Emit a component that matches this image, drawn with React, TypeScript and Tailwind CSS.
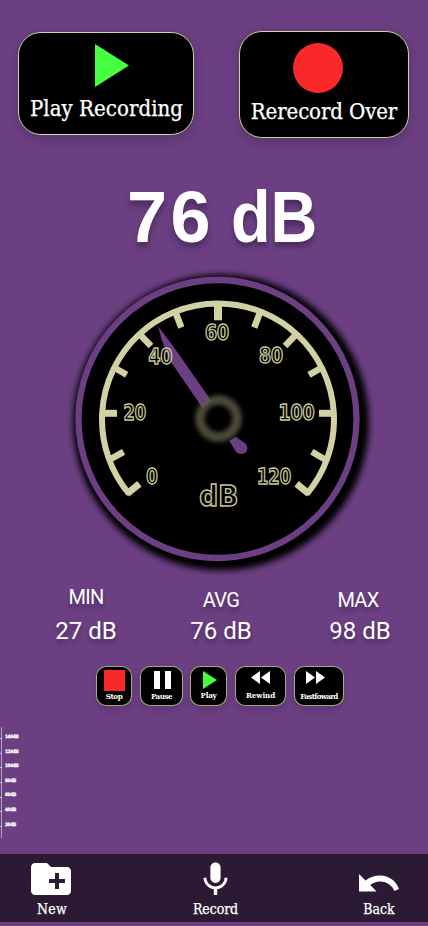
import type { ReactNode } from "react";
import { MdCreateNewFolder, MdMic } from "react-icons/md";

const serif = "font-['DejaVu_Serif_Condensed','DejaVu_Serif',serif]";

const stats = [
    { label: "MIN", value: "27 dB", box: "ml-[46px]", offset: "translate-y-px" },
    { label: "AVG", value: "76 dB", box: "ml-[55px]", offset: "translate-y-1" },
    { label: "MAX", value: "98 dB", box: "ml-[59px]", offset: "translate-y-1 -translate-x-[2px]" },
];

const levels = ["140dB", "120dB", "100dB", "80dB", "60dB", "40dB", "20dB"];

// x1, y1, x2, y2, width
const ticks = [
    [127, 493.9, 139.4, 483.8, 7],
    [109, 460, 123.6, 451.8, 6.5],
    [103, 413.3, 117, 413.3, 7],
    [114, 367.5, 126.7, 374.8, 6.5],
    [139, 333.5, 151, 346, 6.5],
    [175, 311, 181.3, 327.5, 6.5],
    [218, 303, 218, 320.3, 8],
    [260.5, 311, 254.3, 327.5, 6.5],
    [297, 333.5, 285, 346, 6.5],
    [322, 367.5, 309, 374.8, 6.5],
    [333, 413.3, 319, 413.3, 7],
    [326, 460, 311.8, 451.8, 6.5],
    [309, 493.9, 296.6, 483.8, 7],
];

const numbers: [string, number, number, number][] = [
    ["0", 152, 484.3, 11.5],
    ["20", 134.8, 420.3, 22.5],
    ["40", 160.5, 364, 24],
    ["60", 217, 339.6, 24],
    ["80", 271, 362.8, 24],
    ["100", 296.5, 420.3, 36],
    ["120", 274, 484.3, 34],
];

const Gauge = () => (
    <svg width="428" height="322" viewBox="0 262 428 322" className="block shrink-0">
        <defs>
            <filter id="soft" x="-20%" y="-20%" width="140%" height="140%"><feGaussianBlur stdDeviation="3" /></filter>
            <filter id="hub" x="-50%" y="-50%" width="200%" height="200%"><feGaussianBlur stdDeviation="2.2" /></filter>
        </defs>
        <circle cx="221" cy="422.5" r="148" fill="#000" filter="url(#soft)" />
        <circle cx="217.5" cy="419" r="139" fill="#000" stroke="#6b3f82" strokeWidth="6.3" />
        <path d="M129.2 494.1 A116 116 0 1 1 306.8 494.1" fill="none" stroke="#d1d1a3" strokeWidth="6" />
        {ticks.map(([x1, y1, x2, y2, w], i) => (
            <line key={i} x1={x1} y1={y1} x2={x2} y2={y2} stroke="#d1d1a3" strokeWidth={w} />
        ))}
        <path d="M158 326 L173 346 L211.5 401 L202.5 408 L171 362 L162 341 Z" fill="#6b3f82" />
        <path d="M229.3 440.7 L235.7 436.7 L245.5 443.5 Q249 448 246 452.5 Q241 455.5 236 452 Z" fill="#6b3f82" />
        <circle cx="218.5" cy="418.5" r="18.5" fill="none" stroke="#5e5c46" strokeOpacity="0.8" strokeWidth="9.5" filter="url(#hub)" />
        <g className="font-['DejaVu_Sans_Condensed','DejaVu_Sans',sans-serif] font-bold" fill="none" stroke="#c4c497" textAnchor="middle">
            {numbers.map(([n, x, y, w]) => (
                <text key={n} x={x} y={y} fontSize="20.5" strokeWidth="1.4" textLength={w} lengthAdjust="spacingAndGlyphs">{n}</text>
            ))}
            <text x="218.8" y="505.8" fontSize="29" strokeWidth="1.4" textLength="39" lengthAdjust="spacingAndGlyphs">dB</text>
        </g>
    </svg>
);

const Play = ({ className }: { className: string }) => (
    <svg viewBox="0 0 34 43" preserveAspectRatio="none" className={className}><path d="M0 0 L34 21.5 L0 43 Z" fill="#46ff41" /></svg>
);

const Control = ({ label, className, children }: { label: string; className: string; children: ReactNode }) => (
    <button className={`flex h-10 shrink-0 flex-col items-center rounded-[10px] border border-[#d1d1a3]/80 bg-black shadow-[0_4px_6px_rgba(0,0,0,0.12)] ${className}`}>
        {children}
        <span className={`${serif} mt-auto whitespace-nowrap text-[8px] leading-[10px] font-bold`}>{label}</span>
    </button>
);

export default function App() {
    return (
        <div className="flex h-[926px] w-[428px] flex-col overflow-hidden bg-[#6b3f82] text-white">
            <div className="flex h-[138px] shrink-0 items-start pt-[31px] pl-[18px]">
                <button className="mt-px flex h-[103px] w-[176px] flex-col items-center rounded-[23px] border border-[#d1d1a3] bg-black pt-[11px] shadow-[0_4px_12px_rgba(0,0,0,0.18)]">
                    <Play className="ml-[11px] h-[43px] w-[34px] shrink-0" />
                    <span className={`${serif} mt-[8px] ml-px whitespace-nowrap text-[22px] leading-7 tracking-[0.05px] [-webkit-text-stroke:0.25px_white]`}>Play Recording</span>
                </button>
                <button className="ml-[45px] flex h-[107px] w-[170px] flex-col items-center rounded-[23px] border border-[#d1d1a3] bg-black pt-[11px] shadow-[0_4px_12px_rgba(0,0,0,0.18)]">
                    <span className="mr-[12px] h-[50px] w-[50px] shrink-0 rounded-full bg-[#fa2828]" />
                    <span className={`${serif} mt-[5px] whitespace-nowrap text-[22px] leading-7 tracking-[-0.1px] [-webkit-text-stroke:0.25px_white]`}>Rerecord Over</span>
                </button>
            </div>

            <div className="flex h-[124px] shrink-0 pt-[37px] pl-[127px]">
                <h1 className="flex font-['Liberation_Sans',Arial,sans-serif] text-[72px] leading-[84px] font-bold whitespace-nowrap [text-shadow:0_5px_6px_rgba(0,0,0,0.3)]">
                    <span className="tracking-[3.5px]">76</span>
                    <span className="ml-[17px] origin-left scale-x-[0.9]">dB</span>
                </h1>
            </div>

            <Gauge />

            <div className="flex h-[82px] shrink-0 font-['Roboto',sans-serif] [text-shadow:0_4px_4px_rgba(0,0,0,0.3)]">
                {stats.map(s => (
                    <div key={s.label} className={`flex w-20 flex-col items-center whitespace-nowrap ${s.box}`}>
                        <span className={`text-[20px] leading-6 tracking-[-0.7px] ${s.offset}`}>{s.label}</span>
                        <span className="mt-[9px] text-[24px] leading-7">{s.value}</span>
                    </div>
                ))}
            </div>

            <div className="flex h-[43px] shrink-0 items-start pl-24">
                <Control label="Stop" className="w-9 pt-[3px] pb-[4px] tracking-[-0.5px]">
                    <span className="h-[21px] w-[21px] shrink-0 bg-[#fa2828]" />
                </Control>
                <Control label="Pause" className="ml-[8px] w-[43px] pt-[4px] pb-1 tracking-[-0.5px]">
                    <span className="ml-px flex gap-[5px]"><i className="h-[18px] w-[6px] bg-white" /><i className="h-[18px] w-[6px] bg-white" /></span>
                </Control>
                <Control label="Play" className="ml-[7px] w-[37px] pt-1 pb-[5px] tracking-[-0.3px]">
                    <Play className="ml-[2px] h-[18px] w-[14px]" />
                </Control>
                <Control label="Rewind" className="ml-[8px] w-[51px] pt-1 pb-[5px] tracking-[-0.1px]">
                    <svg width="19" height="13" viewBox="0 0 19 13"><path d="M9 0 V13 L0 6.5Z M19 0 V13 L10 6.5Z" fill="#fff" /></svg>
                </Control>
                <Control label="Fastfoward" className="ml-[8px] w-[50px] pt-1 pb-1 tracking-[-0.7px]">
                    <svg width="19" height="13" viewBox="0 0 19 13" className="mr-[7px]"><path d="M0 0 V13 L9 6.5Z M10 0 V13 L19 6.5Z" fill="#fff" /></svg>
                </Control>
            </div>

            <div className="flex h-[145px] shrink-0 pt-[18px]">
                <div className="flex h-[111px] w-[2px] flex-col items-start gap-[13.7px] border-r border-white/50 pt-[11px]">
                    {levels.map(l => <i key={l} className="h-px w-[2px] shrink-0 bg-white/60" />)}
                </div>
                <div className={`${serif} flex flex-col gap-[9.6px] pt-[7px] pl-[3px] text-[4.6px] leading-[5px] font-bold tracking-[-0.3px] [-webkit-text-stroke:0.3px_white]`}>
                    {levels.map(l => <span key={l}>{l}</span>)}
                </div>
            </div>

            <nav className={`${serif} flex h-[68px] shrink-0 bg-[#2c1a35] text-[14px] leading-4 [-webkit-text-stroke:0.25px_white]`}>
                <button className="flex w-[104px] flex-col items-center pt-[1px]">
                    <MdCreateNewFolder className="-ml-[2px] h-12 w-12 shrink-0" />
                    <span className="-mt-[2px] tracking-[0.2px]">New</span>
                </button>
                <button className="ml-[71px] flex w-[81px] flex-col items-center pt-[5px]">
                    <MdMic className="h-[41px] w-[41px] shrink-0" />
                    <span className="mt-px tracking-[-0.1px]">Record</span>
                </button>
                <button className="ml-[83px] flex w-20 flex-col items-center pt-[20px]">
                    <svg width="40" height="18" viewBox="0 0 40 18" className="shrink-0"><path d="M0 0 L6.5 6.5 Q13 1.5 21 1.5 Q35 2 40 15 L35.5 17 Q31 7.5 21 7.5 Q15.5 7.5 11.2 11 L17.5 17.5 L0 17.5 Z" fill="#fff" /></svg>
                    <span className="mt-[9px]">Back</span>
                </button>
            </nav>
        </div>
    );
}
